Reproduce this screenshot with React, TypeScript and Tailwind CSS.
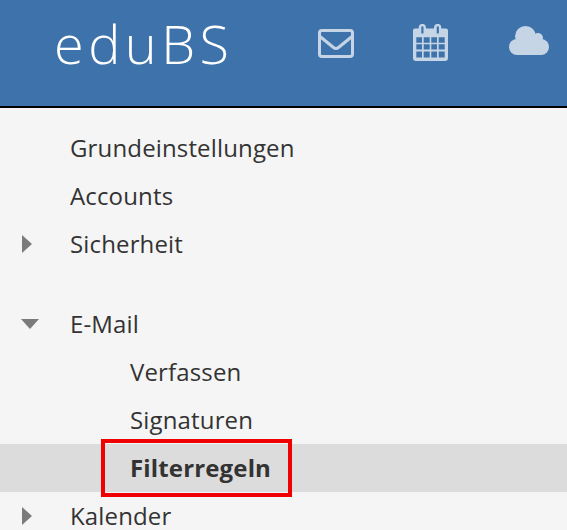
function Envelope() {
  return (
    <svg width="36" height="29" viewBox="0 0 36 29" className="block" fill="none" stroke="currentColor" strokeWidth="3">
      <rect x="1.500" y="1.500" width="33" height="26" rx="2.500" />
      <path d="M2 7.500l13.500 11c1.500 1.200 3.500 1.200 5 0L34 7.500" strokeLinejoin="round" />
    </svg>
  );
}

function Calendar() {
  return (
    <svg width="35" height="37" viewBox="0 0 35 37" className="block">
      <path
        fillRule="evenodd"
        fill="currentColor"
        d="M2 4.500h3.700V3.500a3.500 3.500 0 0 1 7.300 0v1h8V3.500a3.500 3.500 0 0 1 7.300 0v1H33a2 2 0 0 1 2 2V34a3 3 0 0 1-3 3H3a3 3 0 0 1-3-3V6.500a2 2 0 0 1 2-2zM8.300 2.500v7h2.200v-7H8.300zm15.400 0v7h2.200v-7h-2.200zM3.300 13.300v5.400H9v-5.400H3.300zm7.400 0v5.400h6v-5.400h-6zm7.600 0v5.400H24v-5.400h-5.700zm7.400 0v5.400h6v-5.400h-6zM3.300 20.300v5.200H9v-5.200H3.300zm7.400 0v5.200h6v-5.200h-6zm7.600 0v5.200H24v-5.200h-5.700zm7.400 0v5.200h6v-5.200h-6zM3.300 27.500v6H9v-6H3.300zm7.400 0v6h6v-6h-6zm7.600 0v6H24v-6h-5.700zm7.400 0v6h6v-6h-6z"
      />
    </svg>
  );
}

function Cloud() {
  return (
    <svg width="40" height="29" viewBox="0 0 40 29" className="block" fill="currentColor">
      <circle cx="8" cy="21" r="8" />
      <circle cx="16.500" cy="10.500" r="10.500" />
      <circle cx="29" cy="12" r="5" />
      <circle cx="32" cy="21" r="8" />
      <rect x="8" y="14" width="24" height="15" />
    </svg>
  );
}

function Tri({ open }: { open?: boolean }) {
  return open ? (
    <svg width="18" height="11" viewBox="0 0 18 11" className="block">
      <path d="M0 0h18L9 10z" fill="#7b7b7b" />
    </svg>
  ) : (
    <svg width="10" height="18" viewBox="0 0 10 18" className="block">
      <path d="M0 0l10 9-10 9z" fill="#7b7b7b" />
    </svg>
  );
}

function Row({ label, arrow, sub, active }: { label: string; arrow?: "open" | "closed"; sub?: boolean; active?: boolean }) {
  return (
    <div className={active ? "relative flex h-12 items-center bg-[#dcdcdc]" : "relative flex h-12 items-center"}>
      <div className="flex w-[70px] shrink-0 pl-[22px]">
        {arrow === "open" && <div className="-ml-[1px]"><Tri open /></div>}
        {arrow === "closed" && <Tri />}
      </div>
      <span className={sub ? (active ? "ml-[60px] font-bold" : "ml-[60px]") : ""}>{label}</span>
      {active && <div className="absolute left-[101px] top-[-5px] h-[58px] w-[191px] border-4 border-[#f00000]" />}
    </div>
  );
}

export default function App() {
  return (
    <div className="h-[530px] w-[567px] overflow-hidden bg-[#f5f5f5] font-['Open_Sans',sans-serif] text-[24px] leading-[48px] tracking-[0.15px] text-[#333]">
      <header className="flex h-[108px] items-start border-b-2 border-black bg-[#3d72aa]">
        <div className="ml-[54px] mt-[21px] h-[44px] w-[178px] overflow-hidden">
          <div className="font-['Open_Sans',sans-serif] text-[54px] font-[350] leading-[44px] tracking-[4.500px] text-white blur-[0.5px]">eduBS</div>
        </div>
        <div className="ml-[86px] mt-[29px] text-[#c5d5e6]"><Envelope /></div>
        <div className="ml-[59px] mt-[24px] text-[#c5d5e6]"><Calendar /></div>
        <div className="ml-[61px] mt-[26px] text-[#c5d5e6]"><Cloud /></div>
      </header>
      <nav className="pt-4">
        <Row label="Grundeinstellungen" />
        <Row label="Accounts" />
        <Row label="Sicherheit" arrow="closed" />
        <div className="h-8" />
        <Row label="E-Mail" arrow="open" />
        <Row label="Verfassen" sub />
        <Row label="Signaturen" sub />
        <Row label="Filterregeln" sub active />
        <Row label="Kalender" arrow="closed" />
      </nav>
    </div>
  );
}
